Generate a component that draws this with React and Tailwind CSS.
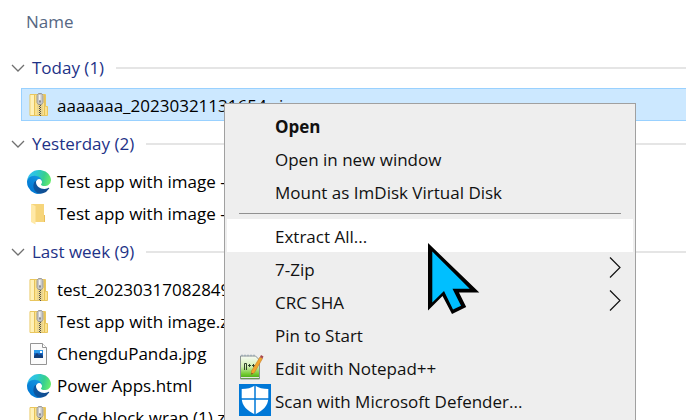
import React from "react";

function ZipIcon() {
  return (
    <svg width="24" height="24" viewBox="0 0 24 24" aria-hidden="true">
      <path d="M3 1.500h15.500v12h2v9H3z" fill="#fbe28e" stroke="#e9c65e" />
      <path d="M3.500 2h3.500v20h-3.500z" fill="#fff1b8" />
      <path d="M7.500 2v20M17.500 2v12v8" stroke="#e6c258" fill="none" />
      <path d="M10 2h6v20h-6z" fill="#efd787" />
      <path d="M11 11v12M15 11v12" stroke="#d9cfa6" strokeWidth="1" strokeDasharray="1 1" />
      <path d="M12.500 11v12" stroke="#55524a" strokeWidth="1" strokeDasharray="1 1" />
      <path d="M13.500 12v11" stroke="#55524a" strokeWidth="1" strokeDasharray="1 1" />
      <path d="M11.500 0.500h3l1.500 2v7l-1.500 2h-3L10 9.500v-7z" fill="#c9c9c9" stroke="#8b8b8b" strokeWidth="0.800" />
      <path d="M12 2h1.500v5H12z" fill="#f1f1f1" />
      <path d="M12.500 7.500h1v2h-1z" fill="#555" />
    </svg>
  );
}

function FolderIcon() {
  return (
    <svg width="24" height="24" viewBox="0 0 24 24" aria-hidden="true">
      <path d="M4 2h13v11h1v7H6z" fill="#f6d57b" />
      <path d="M4 2l4.500 2v18.500L4 20z" fill="#ffe9a7" />
      <path d="M17 13h1v7h-1z" fill="#e9bd58" />
    </svg>
  );
}

function EdgeIcon({ id }) {
  return (
    <svg width="24" height="24" viewBox="0 0 256 256" aria-hidden="true">
      <defs>
        <linearGradient id={id + "a"} x1="0" y1="0" x2="1" y2="0">
          <stop offset="0" stopColor="#0c59a4" />
          <stop offset="1" stopColor="#114a8b" />
        </linearGradient>
        <linearGradient id={id + "b"} x1="1" y1="0" x2="0.400" y2="1">
          <stop offset="0" stopColor="#1b9de2" />
          <stop offset="0.200" stopColor="#1595df" />
          <stop offset="0.700" stopColor="#0680d7" />
          <stop offset="1" stopColor="#0078d4" />
        </linearGradient>
        <linearGradient id={id + "c"} x1="0" y1="0.300" x2="1" y2="0.500">
          <stop offset="0" stopColor="#35c1f1" />
          <stop offset="0.350" stopColor="#2cc6d8" />
          <stop offset="0.700" stopColor="#36cf90" />
          <stop offset="1" stopColor="#66eb6e" />
        </linearGradient>
      </defs>
      <path fill={"url(#" + id + "a)"} d="M231 190.500c-3.400 1.800-6.900 3.400-10.500 4.700a101.900 101.900 0 0 1-35.900 6.400c-47.300 0-88.500-32.500-88.500-74.300a31.500 31.500 0 0 1 16.400-27.300c-42.800 1.800-53.800 46.400-53.800 72.500 0 74 68.100 81.400 82.800 81.400 7.900 0 19.800-2.300 27-4.600l1.300-.4a128.300 128.300 0 0 0 66.600-52.800 4 4 0 0 0-5.400-5.600z" />
      <path fill={"url(#" + id + "b)"} d="M105.700 241.400a79.200 79.200 0 0 1-22.700-21.300 80.700 80.700 0 0 1 29.500-120c3.200-1.500 8.500-4.100 15.600-4a32.400 32.400 0 0 1 25.700 13 31.900 31.900 0 0 1 6.300 18.700c0-.2 24.500-79.600-80-79.600-43.900 0-80 41.600-80 78.200a130.200 130.200 0 0 0 12.100 56 128 128 0 0 0 156.400 67 75.500 75.500 0 0 1-62.800-8z" />
      <path fill={"url(#" + id + "c)"} d="M152.300 148.900c-.8 1-3.300 2.500-3.300 5.700 0 2.600 1.700 5.200 4.800 7.300 14.300 10 41.400 8.600 41.500 8.600a59.600 59.600 0 0 0 30.300-8.300 61.400 61.400 0 0 0 30.400-52.900c.3-22.400-8-37.300-11.300-43.900C223.500 23.900 177.700 0 128 0A128 128 0 0 0 0 126.200c.5-36.500 36.800-66 80-66 3.500 0 23.500.3 42 10.100 16.300 8.600 24.900 18.900 30.800 29.200 6.200 10.700 7.300 24.200 7.300 29.500 0 5.400-2.700 13.400-7.800 19.900z" />
    </svg>
  );
}

function ImageFileIcon() {
  return (
    <svg width="24" height="24" viewBox="0 0 24 24" aria-hidden="true">
      <path d="M3.500 1.500h12l4 4v17h-16z" fill="#fbfbfb" stroke="#949494" />
      <path d="M15.500 1.500v4h4" fill="#fff" stroke="#949494" />
      <path d="M7 8h9v8H7z" fill="#1666c4" />
      <path d="M7 8h9v3H7z" fill="#2f9bea" />
      <path d="M7 16v-2l3-3 2 2 2-1 2 2v2z" fill="#123f7c" />
      <path d="M13 9h2v2h-2z" fill="#fff" />
    </svg>
  );
}

function NotepadIcon() {
  return (
    <svg width="26" height="26" viewBox="0 0 26 26" aria-hidden="true">
      <defs>
        <linearGradient id="pad" x1="0" y1="0" x2="0" y2="1">
          <stop offset="0" stopColor="#f7faf4" />
          <stop offset="0.450" stopColor="#d3efb4" />
          <stop offset="0.800" stopColor="#6fc92c" />
          <stop offset="1" stopColor="#3f9a13" />
        </linearGradient>
      </defs>
      <path d="M1.500 2h15l4 4v19h-19z" fill="url(#pad)" stroke="#8c9493" />
      <path d="M2 1.500h15" stroke="#a3afb8" strokeWidth="1.500" strokeDasharray="2 1" />
      <path d="M2 23.500h18" stroke="#e3e8df" />
      <path d="M5.500 16V9.500h2V16M9 11.500h3M10.500 10v3M13 11.500h3M14.500 10v3" stroke="#30422c" fill="none" />
      <path d="M21 3l2.500 1.500-8 14-3 2v-3.500z" fill="#f2a52d" stroke="#c27c26" strokeWidth="0.600" />
      <path d="M22 1l2.500 1.500-1 2L21 3z" fill="#a8484e" />
      <path d="M12.500 19v1.500l1.500-1z" fill="#4d3822" />
    </svg>
  );
}

function DefenderIcon() {
  return (
    <svg width="32" height="32" viewBox="0 0 32 32" aria-hidden="true">
      <path d="M0 0h32v32H0z" fill="#0078d7" />
      <path d="M16 1.500c3.500 2.500 8 3.500 13.300 3.500V14c0 8-6 13-13.300 16.500C8.700 27 2.700 22 2.700 14V5C8 5 12.500 4 16 1.500z" fill="#fff" />
      <path d="M16 1v30M2 15h28" stroke="#0078d7" strokeWidth="1.500" />
    </svg>
  );
}

function Group({ title, children }) {
  return (
    <section>
      <button type="button" aria-expanded="true" className="flex h-11 w-full items-center text-left text-[#1e3287]">
        <svg width="14" height="8" viewBox="0 0 14 8" className="mr-[7px] shrink-0" aria-hidden="true">
          <path d="M1 1l6 6 6-6" fill="none" stroke="#707070" strokeWidth="1.300" />
        </svg>
        <span>{title}</span>
        <span className="ml-3 h-0.5 flex-1 bg-[#e5e5e5]" />
      </button>
      <ul>{children}</ul>
    </section>
  );
}

function FileRow({ icon, name, selected }) {
  return (
    <li
      className={
        selected
          ? "-mt-0.5 mb-px ml-2.5 flex h-[33px] items-center border border-r-0 border-[#99d1ff] bg-[#cce8ff] pl-[5px]"
          : "ml-2.5 flex h-8 items-center pl-1.5"
      }
    >
      <span className="mr-1.5 shrink-0">{icon}</span>
      <span className={selected ? "pt-0.5 whitespace-nowrap" : "whitespace-nowrap"}>{name}</span>
    </li>
  );
}

function MenuItem({ label, icon, bold, active, submenu }) {
  return (
    <li role="none">
      <button
        type="button"
        role="menuitem"
        className={
          "flex h-[33px] w-full items-center pr-3 text-left whitespace-nowrap " +
          (bold ? "font-bold " : "") +
          (active ? "bg-white" : "")
        }
      >
        <span className="flex h-8 w-12 shrink-0 items-center self-start pl-3">{icon}</span>
        <span className="flex-1 pt-0.5">{label}</span>
        {submenu && (
          <svg width="12" height="21" viewBox="0 0 12 21" className="mb-0.5" aria-hidden="true">
            <path d="M1 0.500l10 10-10 10" fill="none" stroke="#111" strokeWidth="1.200" />
          </svg>
        )}
      </button>
    </li>
  );
}

export default function App() {
  return (
    <main className="relative h-screen overflow-hidden bg-white font-['Open_Sans','Noto_Sans',sans-serif] text-[17px] leading-6 text-black">
      <header className="h-[46px] pt-2.5 pl-[26px] text-[#566783]">Name</header>
      <div className="pl-[11px]">
        <Group title="Today (1)">
          <FileRow selected icon={<ZipIcon />} name="aaaaaaa_20230321131654.zip" />
        </Group>
        <Group title="Yesterday (2)">
          <FileRow icon={<EdgeIcon id="e1" />} name="Test app with image -" />
          <FileRow icon={<FolderIcon />} name="Test app with image -" />
        </Group>
        <Group title="Last week (9)">
          <FileRow icon={<ZipIcon />} name="test_20230317082849.zip" />
          <FileRow icon={<ZipIcon />} name="Test app with image.zip" />
          <FileRow icon={<ImageFileIcon />} name="ChengduPanda.jpg" />
          <FileRow icon={<EdgeIcon id="e2" />} name="Power Apps.html" />
          <FileRow icon={<ZipIcon />} name="Code block wrap (1).zip" />
        </Group>
      </div>

      <ul role="menu" className="absolute top-[103px] left-[224px] w-[412px] border border-[#a0a0a0] bg-[#eee] px-0.5 py-[5px] text-[#111]">
        <MenuItem label="Open" bold />
        <MenuItem label="Open in new window" />
        <MenuItem label="Mount as ImDisk Virtual Disk" />
        <li role="separator" className="mx-3 my-[5px] h-px bg-[#919191]" />
        <MenuItem label="Extract All..." active />
        <MenuItem label="7-Zip" submenu />
        <MenuItem label="CRC SHA" submenu />
        <MenuItem label="Pin to Start" />
        <MenuItem label="Edit with Notepad++" icon={<NotepadIcon />} />
        <MenuItem label="Scan with Microsoft Defender..." icon={<DefenderIcon />} />
      </ul>

      <svg className="absolute top-[242px] left-[427px]" width="53" height="73" viewBox="0 0 53 73" aria-hidden="true">
        <path d="M1 1L52.300 50.500H32L39.200 65 25 72 15.500 54 1 68.500z" fill="#000" />
        <path d="M5.300 9.500L42.700 46.800H25.500L34 63.700 26 67.500 17 49 5.300 60.500z" fill="#00bfff" />
      </svg>
    </main>
  );
}
